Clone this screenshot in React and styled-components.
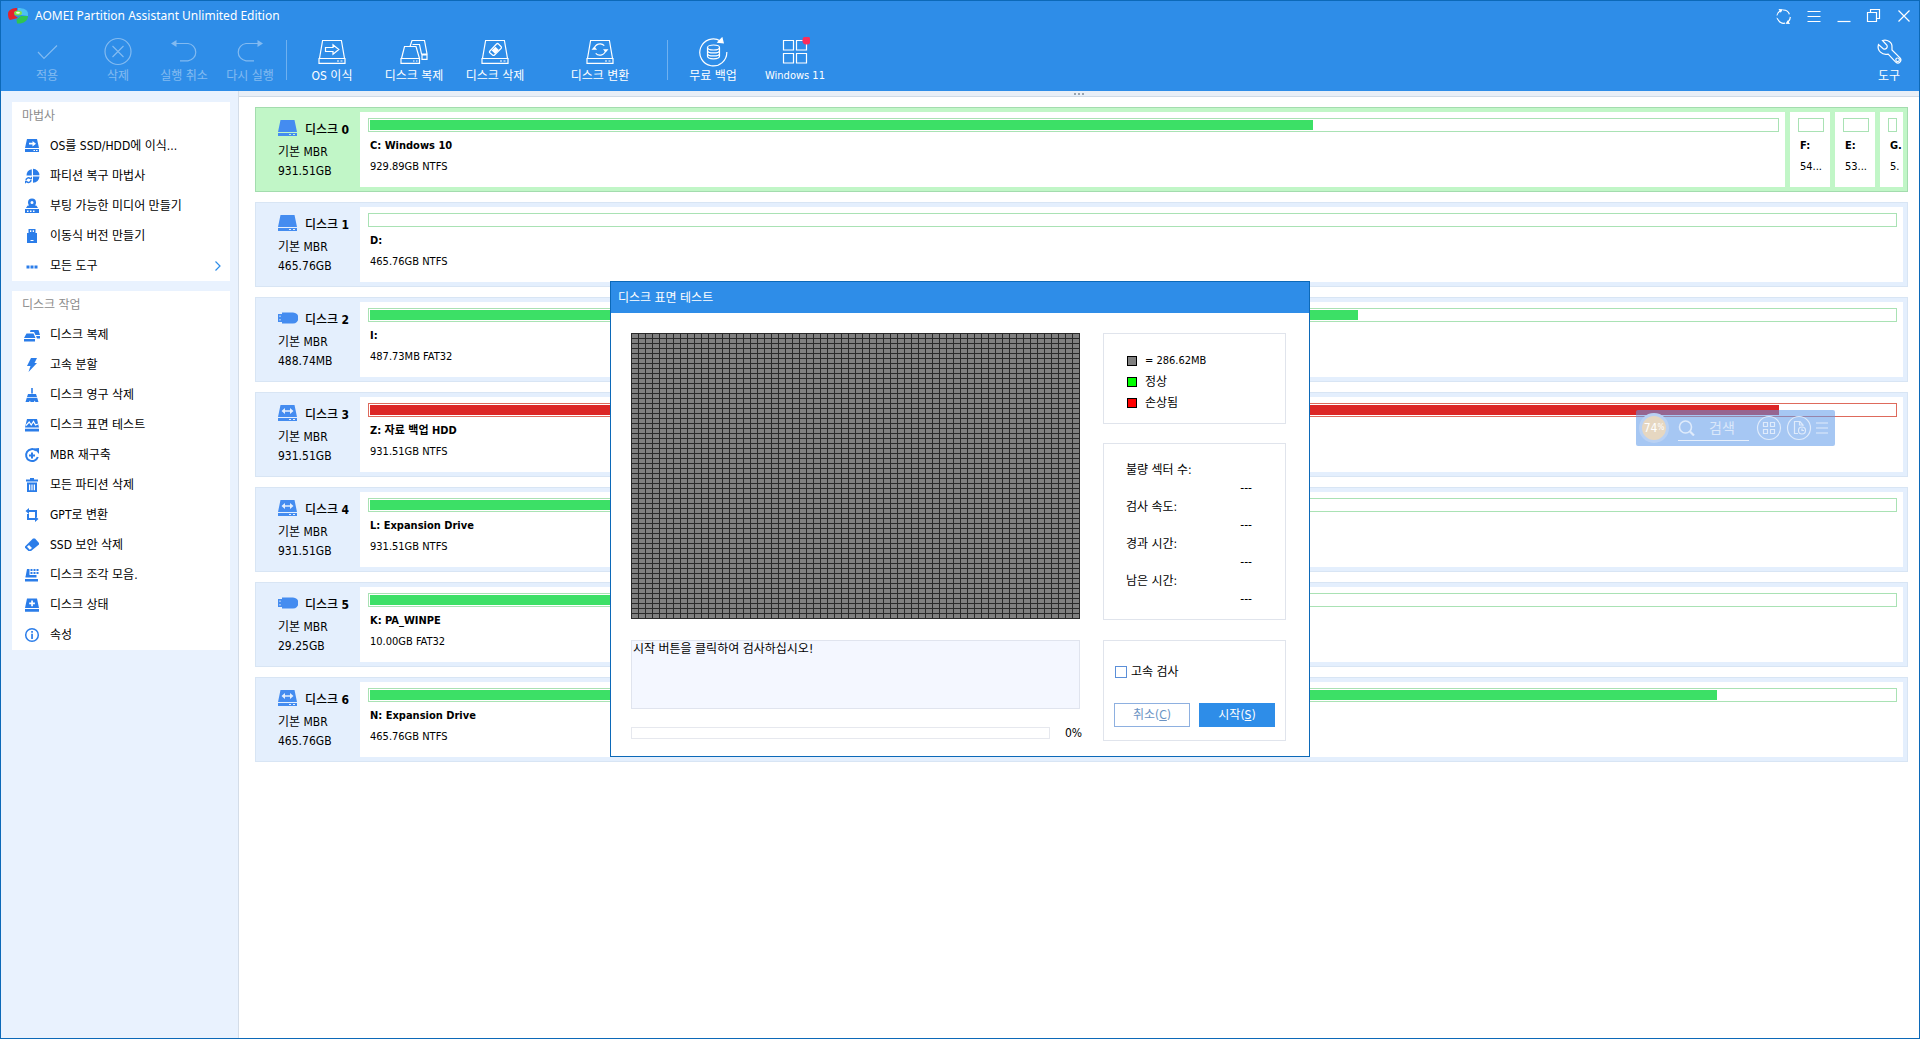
import React from 'react';
import styled, { createGlobalStyle } from 'styled-components';

const blue = '#2e8de8';
const frame = '#0c69b8';
const uiFont = '"DejaVu Sans Condensed", "Noto Sans", "Noto Sans CJK KR", sans-serif';

const GlobalStyle = createGlobalStyle`
  *, *::before, *::after { box-sizing: border-box; }
  body { margin: 0; font-family: ${uiFont}; font-size: 12px; line-height: 16px; color: #000; background: #fff; }
  button, input, textarea { font: inherit; color: inherit; margin: 0; padding: 0; border: 0; background: none; }
  h1, h2, h3, p, ul, dl, dd { margin: 0; padding: 0; font: inherit; list-style: none; }
`;

/* ---------- window ---------- */

const Window = styled.div`
  position: relative;
  display: flex;
  flex-direction: column;
  min-height: 100vh;
  border: 1px solid ${frame};
`;

const Header = styled.header`
  background: ${blue};
  color: #fff;
`;

const TitleBar = styled.div`
  display: flex;
  align-items: center;
  height: 30px;
  padding-left: 6px;
`;

const Title = styled.h1`
  flex: 1;
  margin-left: 6px;
  font-family: "Noto Sans", "Noto Sans CJK KR", sans-serif;
  font-size: 12px;
`;

const WindowButton = styled.button`
  display: grid;
  place-items: center;
  width: 30px;
  height: 30px;
`;

const Toolbar = styled.div`
  display: flex;
  height: 60px;
  padding-left: 8px;
`;

const Tool = styled.button`
  display: flex;
  flex-direction: column;
  align-items: center;
  gap: 1px;
  width: ${(p) => p.$width}px;
  padding-top: 6px;
  font-size: ${(p) => (p.$latin ? 11 : 12)}px;
  white-space: nowrap;
  opacity: ${(p) => (p.disabled ? 0.4 : 1)};
`;

const ToolSeparator = styled.span`
  width: 1px;
  height: 40px;
  margin: 9px 3px 0;
  background: #6fb1f0;
`;

const Spacer = styled.span`
  flex: 1;
`;

const Body = styled.div`
  display: flex;
  flex: 1;
`;

/* ---------- sidebar ---------- */

const Sidebar = styled.nav`
  display: flex;
  flex-direction: column;
  gap: 10px;
  width: 238px;
  padding: 11px 8px 11px 11px;
  background: #e9f2fe;
  border-right: 1px solid #d4dde8;
`;

const Panel = styled.section`
  background: #fff;
`;

const PanelTitle = styled.h2`
  height: 29px;
  padding: 6px 10px;
  color: #8c8c8c;
`;

const NavItem = styled.a`
  display: flex;
  align-items: center;
  gap: 10px;
  height: 30px;
  padding: 0 8px 0 12px;
  color: #000;
  text-decoration: none;
  white-space: nowrap;
`;

const NavLabel = styled.span`
  flex: 1;
`;

/* ---------- disk list ---------- */

const Main = styled.main`
  flex: 1;
  min-width: 0;
`;

const Splitter = styled.div`
  display: flex;
  justify-content: center;
  align-items: center;
  gap: 2px;
  height: 6px;
  background: #e9eff7;
  border-bottom: 1px solid #d0dae5;
`;

const Dot = styled.i`
  width: 2px;
  height: 2px;
  background: #98a4b0;
`;

const DiskList = styled.ul`
  display: flex;
  flex-direction: column;
  gap: 10px;
  padding: 10px 11px 10px 16px;
`;

const DiskRow = styled.li`
  display: flex;
  gap: 5px;
  height: 85px;
  padding: 4px;
  background: ${(p) => (p.$selected ? '#c1f6c7' : '#e4effd')};
  border: 1px solid ${(p) => (p.$selected ? '#a3dcae' : '#d8e5f4')};
`;

const DiskInfo = styled.div`
  display: flex;
  flex-direction: column;
  width: 95px;
  padding: 5px 0 0 18px;
  line-height: 19px;
  white-space: nowrap;
`;

const DiskName = styled.h3`
  display: flex;
  align-items: center;
  gap: 7px;
  height: 26px;
  font-weight: 500;
`;

const DiskNumber = styled.b`
  font-weight: 700;
`;

const Partition = styled.div`
  flex: ${(p) => (p.$width ? `0 0 ${p.$width}px` : '1 1 0')};
  min-width: 0;
  padding: 6px 6px 0 8px;
  background: #fff;
`;

const Usage = styled.div`
  height: 14px;
  padding: 1px;
  border: 1px solid ${(p) => (p.$full ? '#de6a5c' : '#a9e2b4')};
`;

const UsageFill = styled.div`
  height: 10px;
  background: ${(p) => (p.$full ? '#dc2626' : '#3ce066')};
`;

const PartitionName = styled.p`
  margin: 6px 0 5px 2px;
  font-size: 11px;
  font-weight: 700;
  white-space: nowrap;
`;

const PartitionSize = styled.p`
  margin-left: 2px;
  font-size: 11px;
  white-space: nowrap;
`;

/* ---------- floating search widget ---------- */

const Widget = styled.div`
  position: absolute;
  top: 409px;
  right: 84px;
  display: flex;
  align-items: center;
  width: 199px;
  height: 36px;
  padding: 0 5px 0 3px;
  border-radius: 2px;
  background: rgba(93, 153, 233, 0.55);
  color: #dfebfb;
`;

const Gauge = styled.div`
  display: flex;
  justify-content: center;
  align-items: center;
  width: 30px;
  height: 30px;
  border: 3px solid #b9d1f3;
  border-radius: 50%;
  background: #e6d7c1;
  color: #fff;
`;

const Percent = styled.small`
  font-size: 8px;
`;

const SearchBox = styled.label`
  display: flex;
  align-items: center;
  gap: 3px;
  width: 71px;
  height: 26px;
  margin: 0 5px 0 9px;
  border-bottom: 1px solid #e6effc;
`;

const SearchInput = styled.input`
  width: 48px;
  font-size: 14px;
  text-align: center;
  &::placeholder { color: #dbe8fa; opacity: 1; }
`;

const WidgetButton = styled.button`
  display: grid;
  place-items: center;
  width: ${(p) => p.$width}px;
  height: 30px;
`;

/* ---------- dialog ---------- */

const Overlay = styled.div`
  position: absolute;
  inset: 0;
  display: grid;
  place-items: center;
  padding-bottom: 1px;
`;

const Dialog = styled.section`
  width: 700px;
  background: #fff;
  border: 1px solid ${frame};
`;

const DialogTitle = styled.h2`
  padding: 8px 7px 7px;
  background: ${blue};
  color: #fff;
`;

const DialogBody = styled.div`
  display: grid;
  grid-template-columns: minmax(0, 1fr) 183px;
  column-gap: 23px;
  row-gap: 20px;
  padding: 20px 23px 15px 20px;
`;

const SectorMap = styled.div`
  height: 286px;
  background-color: #808080;
  background-image:
    linear-gradient(90deg, #2a2a2a 1px, transparent 1px),
    linear-gradient(#2a2a2a 1px, transparent 1px);
  background-size: 7px 5px;
`;

const SideColumn = styled.div`
  display: flex;
  flex-direction: column;
  gap: 19px;
`;

const Box = styled.div`
  border: 1px solid #e0e4ec;
`;

const LegendBox = styled(Box)`
  display: flex;
  flex-direction: column;
  gap: 5px;
  height: 91px;
  padding: 19px 23px 0;
`;

const LegendItem = styled.div`
  display: flex;
  align-items: center;
  gap: 8px;
  font-size: ${(p) => (p.$latin ? 11 : 12)}px;
`;

const Swatch = styled.i`
  width: 10px;
  height: 10px;
  border: 1px solid #000;
  background: ${(p) => p.$color};
`;

const StatsBox = styled(Box)`
  height: 177px;
  padding: 18px 33px 0 22px;
`;

const StatLabel = styled.dt`
  height: 18px;
`;

const StatValue = styled.dd`
  height: 19px;
  text-align: right;
`;

const LogColumn = styled.div`
  display: flex;
  flex-direction: column;
  gap: 16px;
`;

const Log = styled.textarea`
  display: block;
  width: 100%;
  height: 69px;
  padding: 0 1px;
  resize: none;
  background: #f4f7ff;
  border: 1px solid #e0e4ee;
`;

const ProgressRow = styled.div`
  display: flex;
  align-items: center;
  gap: 15px;
`;

const Track = styled.div`
  flex: none;
  width: 419px;
  height: 12px;
  border: 1px solid #e6e8ee;
`;

const ActionBox = styled(Box)`
  height: 101px;
  padding: 23px 10px 0;
`;

const CheckLabel = styled.label`
  display: flex;
  align-items: center;
  gap: 4px;
`;

const Checkbox = styled.input`
  appearance: none;
  width: 12px;
  height: 12px;
  margin-left: 1px;
  border: 1px solid #5b8fd8;
  background: #fff;
`;

const Actions = styled.div`
  display: flex;
  gap: 9px;
  margin-top: 23px;
`;

const ActionButton = styled.button`
  width: 76px;
  height: 24px;
  border: 1px solid ${(p) => (p.$primary ? blue : '#8eb0e0')};
  background: ${(p) => (p.$primary ? blue : '#fff')};
  color: ${(p) => (p.$primary ? '#fff' : '#6a93c4')};
`;

/* ---------- icons ---------- */

const Line = ({ size = 30, children, ...rest }) => (
  <svg width={size} height={size} viewBox={`0 0 ${size} ${size}`} fill="none" stroke="currentColor" strokeWidth="1.2" aria-hidden="true" {...rest}>
    {children}
  </svg>
);

const DriveOutline = ({ children }) => (
  <Line>
    <path d="M5.6 3.5h18.8l3.1 18H2.5zM2 21.5h26v4.900H2zM20 24h2M23.500 24h2" />
    {children}
  </Line>
);

const toolIcons = {
  apply: <Line><path d="m6 15 6 6.500L25 8.500" /></Line>,
  discard: <Line><circle cx="15" cy="14.500" r="13" /><path d="m9.500 9 11 11m0-11-11 11" /></Line>,
  undo: <Line><path d="M6 6.500h13a8.700 8.700 0 0 1 0 17.300h-8" /><path d="M2 6.500 7.500 3v7z" fill="currentColor" stroke="none" /></Line>,
  redo: <Line><path d="M24 6.500H11a8.700 8.700 0 0 0 0 17.300h8" /><path d="M28 6.500 22.500 3v7z" fill="currentColor" stroke="none" /></Line>,
  migrate: <DriveOutline><path d="M8.500 10.500h7.500V7.800l5.800 4.700-5.800 4.700v-2.700H8.500z" /></DriveOutline>,
  clone: (
    <Line>
      <path d="M5.500 9.500h11.500l3.500 12h-18zM2 21.500h18.500v4.900H2zM14 24h1.500M17 24h1.500M11 9.500l2-6h12.500l2.500 13.500h-5.500L20.500 7.500h-7M23 18h5v4.400h-5z" />
    </Line>
  ),
  wipe: (
    <DriveOutline>
      <path d="m9.500 14.500 7-7.500q1-1 2 0l2.500 2.500q1 1 0 2l-6.500 6.500q-1 1-2 0l-3-2.500z" />
      <path d="m12.500 13.500 3-3 2.500 2.500-3 3z" fill="currentColor" />
    </DriveOutline>
  ),
  convert: (
    <DriveOutline>
      <path d="M9.300 12a5.800 5.800 0 0 1 10-3.300M20.700 13a5.800 5.800 0 0 1-10 3.300" />
      <path d="M6.500 12.800h5.600L9.300 9.500zM18 12.200h5.500l-2.800 3.300z" fill="currentColor" stroke="none" />
    </DriveOutline>
  ),
  backup: (
    <Line>
      <path d="M22.500 4a13.500 13.500 0 1 0 6.300 11" />
      <path d="m20 5.200 4-4.200 1.200 4.800z" fill="currentColor" />
      <ellipse cx="15.500" cy="10.500" rx="6" ry="2.500" />
      <path d="M9.500 10.500v8.800c0 1.400 2.700 2.500 6 2.500s6-1.100 6-2.500v-8.800M9.500 13.400c0 1.400 2.700 2.500 6 2.500s6-1.100 6-2.500M9.500 16.400c0 1.400 2.700 2.500 6 2.500s6-1.100 6-2.500" />
    </Line>
  ),
  windows: (
    <Line>
      <path d="M3.500 3.500h10v9.500h-10zM16.500 3.500h10v9.500h-10zM3.500 16.500h10v9.500h-10zM16.500 16.500h10v9.500h-10z" />
      <circle cx="26.500" cy="3.500" r="3.500" fill="#fb2c5b" stroke="#fb2c5b" />
    </Line>
  ),
  wrench: (
    <Line>
      <path d="M8.500 3.500c5-1.500 10 2 9.500 7v2.500l8 7.800c2.500 3-1.200 7-4.300 4.300l-7.500-8c-6 1.500-11.500-3.500-9.700-9.600l5 4.500c2.500.8 4.500-1.500 3.500-3.700z" />
      <circle cx="23.600" cy="22.800" r="1.800" />
    </Line>
  ),
};

const windowIcons = {
  refresh: (
    <Line size={18}>
      <path d="M3.200 12.500A6.700 6.700 0 0 1 5.500 4M8.500 3a6.600 6.600 0 0 1 6.500 4.500M15.800 9.500a6.700 6.700 0 0 1-2.300 5.500M10.500 16.200a6.600 6.600 0 0 1-7-3.700" transform="translate(-.5)" />
      <path d="m3.500 2 4.500.2-2.300 3.600zM15 17l-4.500-.2 2.300-3.600z" fill="currentColor" stroke="none" />
      <path d="m1.500 8.500 1.200 2.500M15.500 7v3" stroke={blue} strokeWidth="2" />
    </Line>
  ),
  menu: <Line size={18}><path d="M2.500 4.500h13M2.500 9.500h13M2.500 14.500h13" /></Line>,
  minimize: <Line size={18}><path d="M2.500 14.500h13" /></Line>,
  restore: <Line size={18}><path d="M2.500 5.500h9v9h-9zM5.500 5.500v-3h9v9h-3" /></Line>,
  close: <Line size={18}><path d="m3.500 3.500 11 11m0-11-11 11" /></Line>,
};

const Solid = ({ children }) => (
  <svg width="16" height="16" viewBox="0 0 16 16" fill="#2b7de9" aria-hidden="true">
    {children}
  </svg>
);

const navIcons = {
  migrate: <Solid><path fillRule="evenodd" d="M3 1h10l2 9H1zM5 4.800v1.700h3.500v2L12 5.700 8.500 3v1.800zM1 11h14v3H1zM9.500 12v1H11v-1zM12 12v1h1.500v-1z" /></Solid>,
  recover: (
    <Solid>
      <path d="M9 .8a6.700 6.700 0 0 1 6.500 6.500H9zM7.800 1.200v6.300H2.500A6.500 6.500 0 0 1 7.800 1.200zM15.500 8.600A7 7 0 0 1 9 14.800V8.600z" />
      <path d="M2 12.500a2.500 2.500 0 0 1 4.200-2M7 11.500a2.500 2.500 0 0 1-4.200 2.200" fill="none" stroke="#2b7de9" strokeWidth="1.400" />
      <path d="M5 11h3V8.500zM4 13H1v2.700z" />
    </Solid>
  ),
  media: <Solid><path fillRule="evenodd" d="M4 4.500a4 4 0 0 1 8 0c0 1.300-.4 2.200-1.200 3h1.500L14 10H2l1.700-2.500h1.500A4 4 0 0 1 4 4.500zM8 3a1.500 1.500 0 1 0 0 3 1.500 1.500 0 0 0 0-3zM1 11h14v4H1zM3 12.500V14h1.500v-1.500zM6 12.500V14h1.500v-1.500zM9 12.500V14h1.500v-1.500z" /></Solid>,
  usb: <Solid><path fillRule="evenodd" d="M4.500 1h7v4H13v10H3V5h1.500zM6 2.300V4h1.300V2.300zM8.700 2.300V4H10V2.300zM6.500 12v1h3v-1z" /></Solid>,
  more: <Solid><path d="M2.500 7.500h3v3h-3zM6.500 7.500h3v3h-3zM10.500 7.500h3v3h-3z" /></Solid>,
  clone: <Solid><path d="M2.500 6.500h7L11.500 11H0zM0 12h11v2.500H0zM6.500 3h8l1.500 5h-4.500L10 5H6zM12 9h4v2.500h-3z" /></Solid>,
  bolt: <Solid><path d="M7 1h6l-2.500 5H13L4.500 15 6.500 9H3z" /></Solid>,
  broom: <Solid><path d="M7.200 1h1.600v5.500H7.200zM4 7h8l1 3H3zM2.800 10.800h10.400L14.500 15h-3l-1-1.500-.5 1.500H6.500L6 13.500 5 15H1.500z" /></Solid>,
  surface: (
    <Solid>
      <path d="M3 2h10l2 8.500H1zM1 11.800h14v2.700H1z" />
      <path d="m2 8.500 3.200-3.500 2 3 2.300-3.500 2 3.500 2.500-1" fill="none" stroke="#fff" strokeWidth="1.200" />
    </Solid>
  ),
  rebuild: (
    <Solid>
      <path d="M12 3.500a6 6 0 1 0 1.800 6.500" fill="none" stroke="#2b7de9" strokeWidth="2" />
      <path d="M10 1.500 15 1v6zM7 5.500h2v2h2v2H9v2H7v-2H5v-2h2z" />
    </Solid>
  ),
  trash: <Solid><path fillRule="evenodd" d="M6 1h4v1.500h4v2H2v-2h4zM3 5.500h10V15H3zM5 7.500v5.700h1.300V7.500zM7.400 7.500v5.700h1.200V7.500zM9.700 7.500v5.700H11V7.500z" /></Solid>,
  gpt: <Solid><path d="M5 1v2h8v7h-2V5H5v2L1.500 4zM11 15v-2H3V7h2v4h6V9l3.500 3z" /></Solid>,
  eraser: <Solid><path fillRule="evenodd" d="m1 9.500 8-8h2L15 6v1.500L7 14H4.500L1 10.800zM3 9.800 5.800 12.700 8 11 5 8z" /></Solid>,
  defrag: <Solid><path d="M3 2h2.500v8H1.500zM6.500 2h2v2h-2zM9.500 2h2v2h-2zM12.500 2h2v2h-2zM6.500 5h2v2h-2zM9.500 5h2v2h-2zM12.500 5h2v2h-2zM5 8h7.500v2.500H1.500V9zM1 12h13v2.500H1z" /></Solid>,
  health: <Solid><path fillRule="evenodd" d="M3 1.500h10l2 9.500H1zM7.200 3.500v2h-2v1.700h2v2h1.700v-2h2V5.500h-2v-2zM1 12h14v2.800H1z" /></Solid>,
  info: (
    <Solid>
      <circle cx="8" cy="8" r="6.300" fill="none" stroke="#2b7de9" strokeWidth="1.500" />
      <path d="M7.200 4h1.700v1.700H7.200zM7.200 6.700h1.700V12H7.200z" />
    </Solid>
  ),
};

const diskIcons = {
  internal: <path d="M2.500 0h14L19 12H0zM0 13h19v3H0zM11 14v1h2v-1zM15 14v1h2v-1z" fillRule="evenodd" />,
  external: <path d="M2.500 0h14L19 12H0zM3.500 6l3.500 3V6.800h5V9l3.500-3L12 3v2.200H7V3zM0 13h19v3H0zM11 14v1h2v-1zM15 14v1h2v-1z" fillRule="evenodd" />,
  usb: <path d="M0 4h4V2.500h11a5.500 5.500 0 0 1 0 11H4V12H0zM1.500 5.500v1.500h1V5.500zM1.500 9v1.500h1V9z" fillRule="evenodd" />,
};

const DiskIcon = ({ kind }) => (
  <svg width="20" height="20" viewBox="0 0 20 20" fill="#448cf0" aria-hidden="true">{diskIcons[kind]}</svg>
);

const Logo = () => (
  <svg width="22" height="18" viewBox="0 0 22 18" aria-hidden="true">
    <path d="M1 7C1 2 7 1 10 1v4L7 8l4 3-8 2C1.500 12 1 9 1 7z" fill="#e3222b" />
    <path d="M11 1c6 0 10 2 10 6v2l-7-1-3-3z" fill="#4bc0f2" />
    <path d="M21 9c0 5-5 8-11 7.500l-.5-4L14 9z" fill="#2fc552" />
    <ellipse cx="11" cy="6" rx="4" ry="2.500" fill="#7ee04a" />
    <ellipse cx="11" cy="5.700" rx="2" ry="1" fill="#e9fbe4" />
  </svg>
);

/* ---------- data ---------- */

const tools = [
  { icon: 'apply', label: '적용', width: 76, disabled: true },
  { icon: 'discard', label: '삭제', width: 66, disabled: true },
  { icon: 'undo', label: '실행 취소', width: 66, disabled: true },
  { icon: 'redo', label: '다시 실행', width: 66, disabled: true },
  null,
  { icon: 'migrate', label: 'OS 이식', width: 84 },
  { icon: 'clone', label: '디스크 복제', width: 80 },
  { icon: 'wipe', label: '디스크 삭제', width: 82 },
  { icon: 'convert', label: '디스크 변환', width: 128 },
  null,
  { icon: 'backup', label: '무료 백업', width: 84 },
  { icon: 'windows', label: 'Windows 11', width: 80, latin: true },
];

const windowButtons = [
  ['refresh', '새로 고침'],
  ['menu', '메뉴'],
  ['minimize', '최소화'],
  ['restore', '이전 크기로'],
  ['close', '닫기'],
];

const panels = [
  {
    title: '마법사',
    items: [
      ['migrate', 'OS를 SSD/HDD에 이식...'],
      ['recover', '파티션 복구 마법사'],
      ['media', '부팅 가능한 미디어 만들기'],
      ['usb', '이동식 버전 만들기'],
      ['more', '모든 도구', true],
    ],
  },
  {
    title: '디스크 작업',
    items: [
      ['clone', '디스크 복제'],
      ['bolt', '고속 분할'],
      ['broom', '디스크 영구 삭제'],
      ['surface', '디스크 표면 테스트'],
      ['rebuild', 'MBR 재구축'],
      ['trash', '모든 파티션 삭제'],
      ['gpt', 'GPT로 변환'],
      ['eraser', 'SSD 보안 삭제'],
      ['defrag', '디스크 조각 모음.'],
      ['health', '디스크 상태'],
      ['info', '속성'],
    ],
  },
];

const disks = [
  {
    kind: 'internal', size: '931.51GB', selected: true,
    parts: [
      { name: 'C: Windows 10', size: '929.89GB NTFS', used: 67 },
      { name: 'F:', size: '54...', used: 0, width: 40 },
      { name: 'E:', size: '53...', used: 0, width: 40 },
      { name: 'G.', size: '5.', used: 0, width: 23 },
    ],
  },
  { kind: 'internal', size: '465.76GB', parts: [{ name: 'D:', size: '465.76GB NTFS', used: 0 }] },
  { kind: 'usb', size: '488.74MB', parts: [{ name: 'I:', size: '487.73MB FAT32', used: 64.8 }] },
  { kind: 'external', size: '931.51GB', parts: [{ name: 'Z: 자료 백업 HDD', size: '931.51GB NTFS', used: 92.4, full: true }] },
  { kind: 'external', size: '931.51GB', parts: [{ name: 'L: Expansion Drive', size: '931.51GB NTFS', used: 50 }] },
  { kind: 'usb', size: '29.25GB', parts: [{ name: 'K: PA_WINPE', size: '10.00GB FAT32', used: 50 }] },
  { kind: 'external', size: '465.76GB', parts: [{ name: 'N: Expansion Drive', size: '465.76GB NTFS', used: 88.3 }] },
];

const legend = [
  ['#808080', '= 286.62MB', true],
  ['#00ff00', '정상'],
  ['#ff0000', '손상됨'],
];

const stats = ['불량 섹터 수:', '검사 속도:', '경과 시간:', '남은 시간:'];

/* ---------- parts ---------- */

function AppHeader() {
  return (
    <Header>
      <TitleBar>
        <Logo />
        <Title>AOMEI Partition Assistant Unlimited Edition</Title>
        {windowButtons.map(([icon, label]) => (
          <WindowButton key={icon} aria-label={label}>{windowIcons[icon]}</WindowButton>
        ))}
      </TitleBar>
      <Toolbar>
        {tools.map((tool, i) =>
          tool ? (
            <Tool key={tool.icon} $width={tool.width} $latin={tool.latin} disabled={tool.disabled}>
              {toolIcons[tool.icon]}
              {tool.label}
            </Tool>
          ) : (
            <ToolSeparator key={i} />
          )
        )}
        <Spacer />
        <Tool $width={60}>
          {toolIcons.wrench}
          도구
        </Tool>
      </Toolbar>
    </Header>
  );
}

function DiskCard({ disk, index }) {
  return (
    <DiskRow $selected={disk.selected}>
      <DiskInfo>
        <DiskName>
          <DiskIcon kind={disk.kind} />
          <span>디스크 <DiskNumber>{index}</DiskNumber></span>
        </DiskName>
        <p>기본 MBR</p>
        <p>{disk.size}</p>
      </DiskInfo>
      {disk.parts.map((part) => (
        <Partition key={part.name} $width={part.width}>
          <Usage $full={part.full}>
            <UsageFill $full={part.full} style={{ width: `${part.used}%` }} />
          </Usage>
          <PartitionName>{part.name}</PartitionName>
          <PartitionSize>{part.size}</PartitionSize>
        </Partition>
      ))}
    </DiskRow>
  );
}

function SearchWidget() {
  return (
    <Widget>
      <Gauge>74<Percent>%</Percent></Gauge>
      <SearchBox>
        <Line size={17} strokeWidth="1.600"><circle cx="7.500" cy="8" r="6" /><path d="m12 12.500 4 4" strokeWidth="2.200" /></Line>
        <SearchInput type="text" placeholder="검색" aria-label="검색" />
      </SearchBox>
      <WidgetButton $width={30} aria-label="앱">
        <Line size={26}><circle cx="13" cy="13" r="11.500" /><path d="M7.500 7.500h4v4h-4zM14.500 7.500h4v4h-4zM7.500 14.500h4v4h-4zM14.500 14.500h4v4h-4z" /></Line>
      </WidgetButton>
      <WidgetButton $width={30} aria-label="최근 문서">
        <Line size={26}><circle cx="13" cy="13" r="11.500" /><path d="M12 18.500H8.500v-12h5.500l3 3.500v1M13.500 6.500v3.500H17" /><circle cx="16" cy="15.500" r="3.500" /><path d="M16 13.500v2h2" /></Line>
      </WidgetButton>
      <WidgetButton $width={16} aria-label="메뉴">
        <Line size={12}><path d="M0 1h12M0 6h12M0 11h12" /></Line>
      </WidgetButton>
    </Widget>
  );
}

function SurfaceTestDialog() {
  return (
    <Overlay>
      <Dialog role="dialog" aria-labelledby="surface-test">
        <DialogTitle id="surface-test">디스크 표면 테스트</DialogTitle>
        <DialogBody>
          <SectorMap />
          <SideColumn>
            <LegendBox>
              {legend.map(([color, label, latin]) => (
                <LegendItem key={color} $latin={latin}><Swatch $color={color} />{label}</LegendItem>
              ))}
            </LegendBox>
            <StatsBox as="dl">
              {stats.map((label) => (
                <React.Fragment key={label}>
                  <StatLabel>{label}</StatLabel>
                  <StatValue>---</StatValue>
                </React.Fragment>
              ))}
            </StatsBox>
          </SideColumn>
          <LogColumn>
            <Log readOnly aria-label="검사 기록" defaultValue="시작 버튼을 클릭하여 검사하십시오!" />
            <ProgressRow>
              <Track role="progressbar" aria-label="진행률" aria-valuenow={0} />
              <span>0%</span>
            </ProgressRow>
          </LogColumn>
          <ActionBox>
            <CheckLabel><Checkbox type="checkbox" />고속 검사</CheckLabel>
            <Actions>
              <ActionButton>취소(<u>C</u>)</ActionButton>
              <ActionButton $primary>시작(<u>S</u>)</ActionButton>
            </Actions>
          </ActionBox>
        </DialogBody>
      </Dialog>
    </Overlay>
  );
}

export default function App() {
  return (
    <>
      <GlobalStyle />
      <Window>
        <AppHeader />
        <Body>
          <Sidebar>
            {panels.map((panel) => (
              <Panel key={panel.title}>
                <PanelTitle>{panel.title}</PanelTitle>
                {panel.items.map(([icon, label, more]) => (
                  <NavItem key={label} href="#">
                    {navIcons[icon]}
                    <NavLabel>{label}</NavLabel>
                    {more && (
                      <svg width="8" height="10" viewBox="0 0 8 10" fill="none" stroke={blue} strokeWidth="1.200" aria-hidden="true">
                        <path d="m1.500.5 4.500 4.500-4.500 4.500" />
                      </svg>
                    )}
                  </NavItem>
                ))}
              </Panel>
            ))}
          </Sidebar>
          <Main>
            <Splitter><Dot /><Dot /><Dot /></Splitter>
            <DiskList>
              {disks.map((disk, i) => <DiskCard key={i} disk={disk} index={i} />)}
            </DiskList>
          </Main>
        </Body>
        <SearchWidget />
        <SurfaceTestDialog />
      </Window>
    </>
  );
}
